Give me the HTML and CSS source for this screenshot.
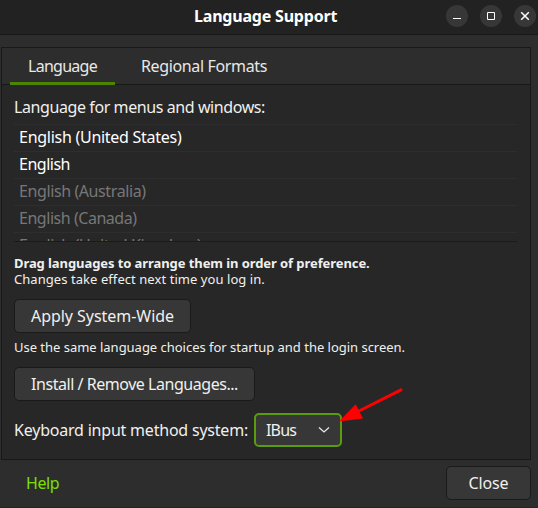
FILE: index.html
```html
<!DOCTYPE html>
<html lang="en">
<head>
<meta charset="utf-8">
<title>Language Support</title>
<link rel="stylesheet" href="styles.css">
</head>
<body>
<div class="window">
  <header class="titlebar">
    <h1 class="title">Language Support</h1>
    <div class="controls">
      <span class="control"><svg width="22" height="22" viewBox="0 0 22 22"><path d="M7 13.5h8" /></svg></span>
      <span class="control"><svg width="22" height="22" viewBox="0 0 22 22"><path d="M7.5 7.5h7v7h-7z" /></svg></span>
      <span class="control"><svg width="22" height="22" viewBox="0 0 22 22"><path class="cross" d="M7.2 7.2l7.6 7.6M14.8 7.2l-7.6 7.6" /></svg></span>
    </div>
  </header>
  <main class="notebook">
    <nav class="tabs">
      <span class="tab tab-language active">Language</span>
      <span class="tab tab-regional">Regional Formats</span>
    </nav>
    <section class="page">
      <p class="heading">Language for menus and windows:</p>
      <ul class="languages">
        <li class="us">English (United States)</li>
        <li class="en">English</li>
        <li class="au off">English (Australia)</li>
        <li class="ca off">English (Canada)</li>
        <li class="uk off">English (United Kingdom)</li>
      </ul>
      <p class="hint strong">Drag languages to arrange them in order of preference.</p>
      <p class="hint changes">Changes take effect next time you log in.</p>
      <button class="button apply">Apply System-Wide</button>
      <p class="hint use">Use the same language choices for startup and the login screen.</p>
      <button class="button install">Install / Remove Languages...</button>
      <div class="input-row">
        <span class="input-label">Keyboard input method system:</span>
        <button class="button combo"><span>IBus</span><svg width="12" height="8" viewBox="0 0 12 8"><path d="M1 1.5l5 4.5 5-4.5" /></svg></button>
        <svg class="arrow" width="64" height="36" viewBox="0 0 64 36"><path class="shaft" d="M63 2.3L18 25" /><path class="head" d="M0 34.5L16.7 17.2 24 31.5z" /></svg>
      </div>
    </section>
  </main>
  <footer class="footer">
    <a class="help">Help</a>
    <button class="button close">Close</button>
  </footer>
</div>
</body>
</html>
```
FILE: styles.css
```css
* { box-sizing: border-box; }
body { margin: 0; background: #2d2d2d; overflow: hidden; }
.window {
  width: 538px; height: 508px; overflow: hidden;
  display: flex; flex-direction: column;
  background: #2d2d2d; color: #f0f0ee;
  font: 16px/22px "Noto Sans", "Open Sans", sans-serif;
  border-bottom: 1px solid #252525;
}
p, h1, ul { margin: 0; padding: 0; white-space: nowrap; }

.titlebar {
  height: 35px; flex: none;
  display: grid; grid-template-columns: 194px 1fr auto;
  background: #222; border-bottom: 1px solid #181818;
}
.title {
  grid-column: 2; padding-top: 5px; color: #fff;
  font-size: 16px; line-height: 22px; letter-spacing: -0.2px;
}
.controls { display: flex; gap: 12px; padding: 5px 2px 0 0; }
.control { width: 22px; height: 22px; border-radius: 50%; background: #373737; }
.control svg { display: block; fill: none; stroke: #fff; stroke-width: 1; }
.control .cross { stroke-width: 1.5; }

.notebook {
  height: 413px; width: 530px; flex: none; margin: 12px 0 0 1px;
  border: 1px solid #181818; background: #272727;
}
.tabs {
  height: 37px; display: flex; padding-left: 8px;
  background: #2d2d2d; border-bottom: 1px solid #181818;
}
.tab { height: 37px; padding: 7px 18px 0; white-space: nowrap; color: #e8e8e6; }
.tab-language { width: 105px; letter-spacing: -0.73px; }
.tab-regional { padding-left: 26px; letter-spacing: -0.36px; }
.active { border-bottom: 3px solid #4b8501; }

.page { padding: 11px 12px 0; }
.heading { letter-spacing: -0.41px; }
.languages {
  height: 118px; width: 503px; margin-top: 6px; overflow: hidden;
  list-style: none; border-bottom: 1px solid #1b1b1b;
}
.languages li {
  height: 27px; border-top: 1px solid #2e2e2e;
  padding: 1px 0 0 5px; color: #fff;
}
.languages .off { color: #777; }
.us { letter-spacing: -0.27px; }
.en { letter-spacing: -0.49px; }
.au { letter-spacing: -0.4px; }
.ca { letter-spacing: -0.46px; }
.uk { letter-spacing: -0.37px; }

.hint { font-size: 13px; line-height: 16px; }
.strong { margin-top: 13px; font-weight: 700; letter-spacing: -0.08px; }
.changes { letter-spacing: 0.06px; }
.use { margin: 6px 0 12px; letter-spacing: -0.02px; }

.button {
  display: flex; align-items: center; justify-content: center;
  height: 34px; margin: 0; padding: 0 0 1px; white-space: nowrap;
  font: inherit; color: #f0f0ee; background: #373737;
  border: 1px solid #1a1a1a; border-radius: 5px;
}
.apply { width: 177px; margin-top: 12px; letter-spacing: -0.04px; }
.install { width: 241px; letter-spacing: -0.46px; }
.input-row { position: relative; display: flex; align-items: center; margin-top: 12px; }
.input-label { width: 240px; letter-spacing: -0.21px; white-space: nowrap; }
.combo {
  width: 88px; justify-content: space-between; padding: 0 10px 1px;
  border: 2px solid #5a9c0e; letter-spacing: -0.84px;
}
.combo svg { fill: none; stroke: #e8e8e6; stroke-width: 1.3; }
.arrow { position: absolute; left: 325px; top: -26px; }
.shaft { stroke: #f00; stroke-width: 3; }
.head { fill: #f00; }

.footer { display: flex; justify-content: space-between; padding: 6px 7px 0 26px; }
.help { padding-top: 6px; color: #7ae000; letter-spacing: -0.46px; }
.close { width: 85px; letter-spacing: -0.12px; }
```
